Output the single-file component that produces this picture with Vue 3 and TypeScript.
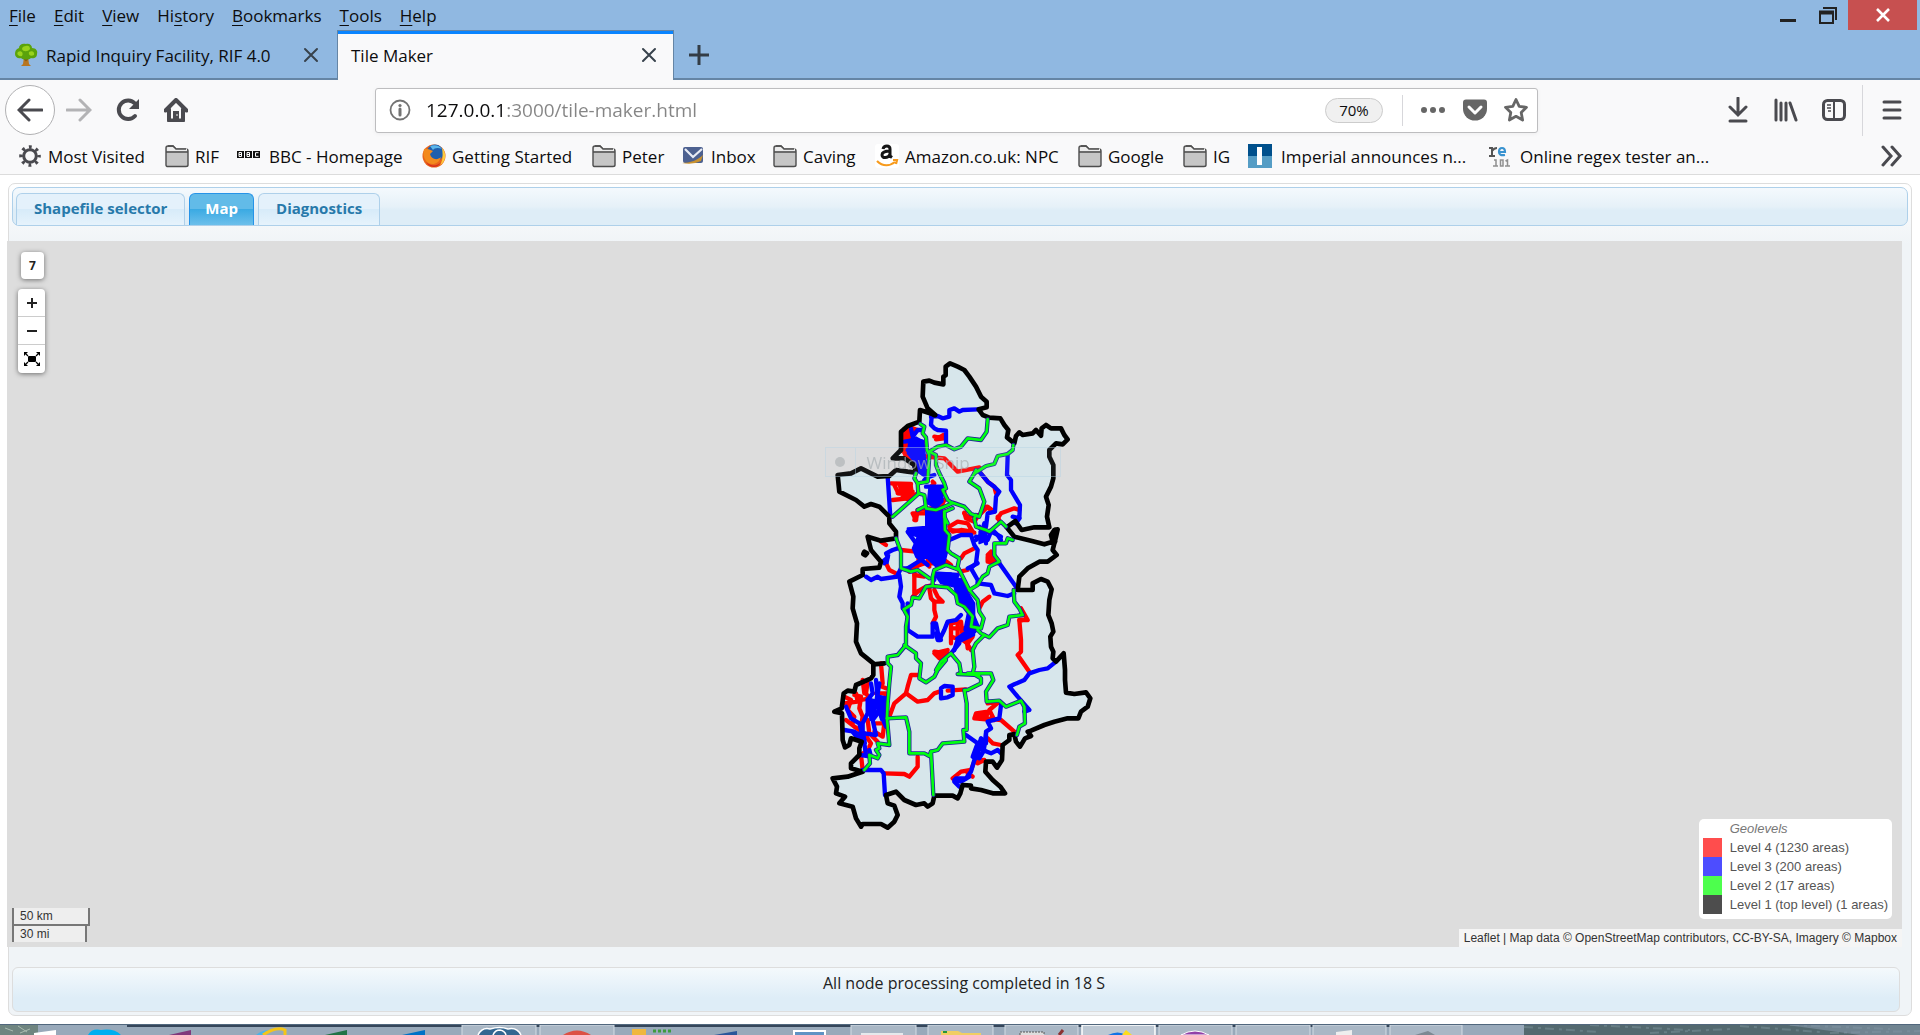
<script setup lang="ts">
import { ref } from 'vue'

interface MenuEntry { before: string; key: string; after: string }
interface Bookmark { icon: string; label: string }
interface Level { name: string; tone: string }

const menus: MenuEntry[] = [
  { before: '', key: 'F', after: 'ile' },
  { before: '', key: 'E', after: 'dit' },
  { before: '', key: 'V', after: 'iew' },
  { before: 'Hi', key: 's', after: 'tory' },
  { before: '', key: 'B', after: 'ookmarks' },
  { before: '', key: 'T', after: 'ools' },
  { before: '', key: 'H', after: 'elp' },
]

const bookmarks: Bookmark[] = [
  { icon: 'gear', label: 'Most Visited' },
  { icon: 'folder', label: 'RIF' },
  { icon: 'bbc', label: 'BBC - Homepage' },
  { icon: 'firefox', label: 'Getting Started' },
  { icon: 'folder', label: 'Peter' },
  { icon: 'mail', label: 'Inbox' },
  { icon: 'folder', label: 'Caving' },
  { icon: 'amazon', label: 'Amazon.co.uk: NPC' },
  { icon: 'folder', label: 'Google' },
  { icon: 'folder', label: 'IG' },
  { icon: 'imperial', label: 'Imperial announces n...' },
  { icon: 'regex', label: 'Online regex tester an...' },
]

const tabs: string[] = ['Shapefile selector', 'Map', 'Diagnostics']
const activeTab = ref('Map')
const address = ref('127.0.0.1:3000/tile-maker.html')

const levels: Level[] = [
  { name: 'Level 4 (1230 areas)', tone: 'red' },
  { name: 'Level 3 (200 areas)', tone: 'blue' },
  { name: 'Level 2 (17 areas)', tone: 'green' },
  { name: 'Level 1 (top level) (1 areas)', tone: 'black' },
]

// Boundary of the whole study region, clockwise from the northern lobe.
const outline =
  '403,195 380,175 365,140 367,95 385,92 400,98 427,103 427,80 434,76 434,50 447,40 470,50 490,60 505,80 525,110 540,140 557,155 557,172 533,178 545,195 565,203 598,205 610,225 622,240 618,262 640,280 645,258 655,247 665,255 695,250 705,240 720,257 722,235 735,225 750,235 780,235 790,255 800,268 785,283 765,280 745,300 745,320 757,345 757,385 750,410 735,440 743,465 738,500 745,532 700,532 662,540 643,513 617,532 640,560 690,572 730,583 755,575 750,555 760,540 770,538 765,560 755,600 767,615 740,635 715,635 680,655 655,680 650,720 695,720 695,700 720,687 740,695 752,718 745,750 742,795 752,820 757,845 748,860 750,890 757,905 755,925 765,935 788,910 792,960 792,990 795,1028 820,1032 855,1027 868,1045 860,1070 840,1085 832,1105 800,1105 760,1115 730,1125 690,1142 680,1145 690,1158 672,1165 657,1190 645,1175 640,1152 625,1155 625,1170 605,1185 603,1230 588,1253 575,1235 555,1235 553,1265 575,1290 598,1310 612,1330 575,1330 540,1320 510,1315 510,1307 485,1305 478,1330 470,1345 455,1337 400,1337 395,1360 380,1370 370,1360 345,1365 310,1350 285,1325 255,1335 260,1360 280,1367 290,1395 280,1415 260,1433 240,1422 185,1422 180,1430 165,1405 155,1370 115,1360 132,1340 105,1330 108,1310 95,1285 140,1280 185,1265 150,1255 150,1240 175,1215 175,1195 182,1175 150,1165 145,1185 132,1192 125,1170 123,1090 100,1085 122,1075 128,1030 140,1022 160,1025 165,1005 210,985 217,975 217,940 180,910 165,875 168,820 155,775 157,740 145,695 185,675 185,657 235,653 240,635 210,600 200,560 240,572 285,565 285,545 265,520 265,500 235,470 210,462 190,470 165,450 115,425 110,375 150,370 180,355 210,370 230,380 265,378 285,360 320,365 345,368 340,345 310,325 275,325 300,300 300,245 320,228 355,215 357,180'

const redLines: string[] = [
  '320,230 350,240 330,260 310,270 330,280', '300,300 318,310 325,320', '400,260 428,265 405,268 428,255',
  '375,320 430,325 470,365 520,355 535,352', '362,320 372,318', '395,395 400,400 390,410',
  '270,400 330,402 310,410 330,415 300,420 335,425 290,430 340,435 305,440 325,450', '280,405 290,425', '320,405 315,440', '275,450 320,445 350,430',
  '345,510 335,490 375,490 375,480', '340,510 345,495', '425,420 430,425', '425,460 430,450',
  '350,480 345,510 350,480 390,475 430,470',
  '490,488 495,505 520,515 530,500', '555,470 570,480', '590,505 600,490 640,475 655,480', '590,500 595,512', '535,365 560,395 580,410 585,430',
  '445,530 470,515 500,520 515,545 480,540 455,545', '445,540 520,548', '490,490 500,500 535,495 560,470 580,485', '240,575 255,585', '300,600 345,605', '480,625 490,610 520,595',
  '255,640 265,660 285,670', '325,665 340,650 370,640 395,640 430,630 450,645', '340,660 340,730 375,710 395,705', '340,675 370,680', '385,650 380,625', '475,665 500,660', '335,740 350,725',
  '560,615 570,605 575,630 590,640 560,635 560,620 580,615', '565,740 545,755 535,775', '385,715 390,745 400,755 400,780 405,800 395,820', '400,720 410,740 425,755 400,755',
  '450,880 450,820 480,815 485,860 510,900', '450,835 500,835 480,870 450,860', '470,820 470,860 500,880 515,860', '495,845 500,895', '400,905 440,910 430,920 415,925 400,910 440,900',
  '660,775 680,810 655,810 660,870 660,905 650,915 685,965', '655,810 665,810',
  '240,940 245,1000 230,1005 255,1015', '350,975 330,975 320,1010 315,1030 280,1060 265,1100', '315,1030 350,1055 380,1050 400,1030 415,1025', '440,1022 495,1018',
  '250,1270 310,1272 325,1280 350,1250 350,1220', '185,1260 180,1215 200,1200',
  '130,1040 150,1050 140,1080 160,1100 155,1120', '160,1035 180,1040 175,1075 185,1100 180,1130', '200,995 195,1030 205,1045 180,1050', '135,1110 160,1130 190,1150 210,1180 205,1190', '225,1120 250,1120 245,1160 220,1145', '200,1110 205,1150 230,1175', '130,1060 170,1055 165,1030', '225,1030 255,1030 245,1090', '185,990 190,1030',
  '560,1060 595,1055 565,1080 580,1110 520,1105 525,1090 560,1085 555,1105 600,1110 640,1145', '560,1165 575,1180 600,1185', '455,1285 480,1265 510,1260 520,1235 550,1230 530,1240', '500,1270 515,1280',
  '590,1055 600,1060',
]

const blueLines: string[] = [
  '390,200 410,198 425,205 445,200 445,180 460,175 475,185 485,180 530,178', '392,200 390,225 400,235 410,240 435,242 435,280', '330,235 335,260 350,240 365,240', '310,275 345,270 365,275',
  '260,380 268,500', '535,365 560,395 580,410 595,425 585,440 582,485 560,490 555,530', '620,318 618,375 630,390 630,420 645,445 657,465 655,505 635,500', '655,505 645,520',
  '375,410 430,410', '370,390 385,380 400,375', '320,300 350,320 340,350 370,370',
  '320,545 345,580 350,620 380,645', '445,570 480,555 510,555 520,585 530,600 525,640 510,655 530,690 530,700', '525,560 560,570 570,545 600,560', '525,570 540,555 550,520 555,580', '535,530 545,550 575,540 590,555 600,570',
  '530,700 570,705 580,730 620,738 640,730', '595,640 645,710', '195,680 210,690 230,680 240,687 290,680', '320,655 360,630 370,620', '250,640 260,620 255,610 275,600 290,595', '290,675 300,655 325,655',
  '295,675 300,710 295,740 305,760 305,775', '320,840 350,860 395,860 395,820 405,820 415,870 430,840 440,815 465,810 480,795', '320,760 320,840', '460,900 470,870 520,845 530,830', '480,690 500,760 530,830', '400,690 400,670 470,675', '405,850 410,870 420,870',
  '450,910 475,880', '500,655 530,640',
  '765,935 740,955 715,960 685,970 670,990 640,1003 625,1010 650,1040 685,1080 670,1085', '420,1040 420,1015 430,1008 455,1010 455,1035 440,1042 420,1045 420,1020', '135,1070 150,1105 175,1120 190,1180 195,1215', '210,1000 215,1030 200,1050 200,1090 185,1120 185,1170', '225,990 230,1040 255,1045', '200,1050 215,1080 230,1090 215,1110 225,1155 190,1150', '130,1140 160,1145 190,1170', '235,1000 225,1060 255,1130', '180,1215 210,1220 205,1200', '185,1260 240,1260 248,1270 252,1335',
  '600,1065 595,1105 560,1115 570,1135 555,1145 555,1180 540,1165 520,1230 510,1265 495,1285 465,1285 460,1295 475,1310', '495,1155 530,1180 515,1220', '525,1225 545,1170 550,1200 535,1225', '545,1200 570,1210 590,1200 600,1210', '555,1150 550,1190',
  '460,1290 480,1295 505,1280',
]

// Dense urban clusters where the level 3 lines run together.
const blueAreas: string[] = [
  '325,270 345,262 368,275 372,320 378,350 365,360 340,335 320,310', '385,410 425,412 425,455 405,475 380,460', '345,335 380,345 378,385 350,365',
  '375,480 425,480 435,520 440,600 430,640 405,650 380,625 345,620 335,595 350,560 320,550 320,535 375,530',
  '400,670 450,670 480,690 505,735 520,760 520,820 530,825 510,850 490,840 500,790 470,750 460,710 420,700',
  '235,1045 255,1045 255,1110 240,1110 228,1070', '200,1045 220,1050 225,1090 208,1110', '150,1145 190,1150 195,1180 170,1170',
  '535,545 550,530 560,570 535,580', '465,865 515,830 520,855 480,875', '245,630 265,615 260,640',
]

const redAreas: string[] = [
  '400,908 440,902 440,915 420,923 405,920', '290,405 335,402 340,440 310,445 295,430', '520,1092 565,1090 555,1110 520,1105', '305,232 340,235 330,300 345,340 310,325 300,300', '345,620 375,640 350,655', '560,615 580,610 590,638 560,635',
]

const greenLines: string[] = [
  '358,222 370,230 365,250 375,262 378,300 385,315 380,395 350,400', '345,370 340,385 350,400 352,432 275,500', '560,208 557,245 540,270 500,265 480,290 460,298 435,285 410,290 385,305 405,315 405,345 415,370 430,400 435,415 425,420 440,450 455,460 430,470 405,480 375,475 370,435 352,430', '637,285 635,300 620,312 590,318 580,342 555,348 520,370 505,395 535,415 550,455 535,500 510,492 490,470 455,458',
  '455,475 430,485 432,540 445,555 440,600 450,610 475,625 470,650 485,680 505,720 530,750 535,785 548,805 540,835 510,830 515,800 490,770 470,760 465,735 440,712 395,708 395,680 400,660 435,645 475,660', '430,485 430,500 440,520', '525,495 520,505 525,530 555,540 565,545 600,515 615,530', '520,370 525,360',
  '285,565 300,605 300,655 330,665 350,660 385,685', '395,708 375,710 355,745 335,742 330,765 308,778 320,800 315,830 315,885 290,915 260,920 260,940 270,950 265,1000 260,1060 258,1105', '310,885 345,910 345,925 360,940 355,985 375,997 400,980 410,960 435,930', '405,960 420,935 450,910 475,940 480,970 470,972 535,975', '505,720 530,705 545,680 560,670 565,650 595,635 580,615 580,580 615,580 620,565 635,570', '638,720 640,755 655,775 665,795 625,800 620,825 590,835 565,862 540,850 530,840', '550,855 525,880 515,900 520,950 515,970 540,985 540,1000 500,1020 490,1020 497,1060 497,1140 487,1140 490,1175 425,1180 410,1200 390,1205 397,1335', '500,970 570,970 577,990 555,1025 557,1055 595,1052 615,1070 660,1052 670,1070 672,1120 655,1130 648,1155', '258,1105 265,1185 230,1180 235,1195 225,1200 235,1215 230,1225 205,1215 207,1240 190,1260', '258,1105 315,1102 325,1145 325,1210 370,1210 385,1218 390,1205', '350,480 370,470',
]
</script>

<template>
  <div class="window">
    <header class="titlebar">
      <nav class="menubar" aria-label="Application menu">
        <button v-for="m in menus" :key="m.key + m.after" type="button" class="menu">{{ m.before }}<u>{{ m.key }}</u>{{ m.after }}</button>
      </nav>
      <div class="window-controls">
        <button type="button" class="wc" aria-label="Minimise">
          <svg width="20" height="20" viewBox="0 0 20 20"><path d="M2 15.500H18" stroke="#222" stroke-width="3" /></svg>
        </button>
        <button type="button" class="wc" aria-label="Restore">
          <svg width="20" height="20" viewBox="0 0 20 20" fill="none" stroke="#222"><path d="M5 3H18V15" stroke-width="2" /><path d="M2 7V18H15V7" stroke-width="2" /><path d="M1 7.500H16" stroke-width="4" /></svg>
        </button>
        <button type="button" class="wc close" aria-label="Close window">
          <svg width="16" height="14" viewBox="0 0 16 14"><path d="M2 1L14 13M14 1L2 13" stroke="#fff" stroke-width="2.600" /></svg>
        </button>
      </div>
    </header>

    <div class="tabstrip">
      <div class="browser-tab">
        <svg width="24" height="24" viewBox="0 0 24 24">
          <path d="M10 14h4l1 7 2 2H7l2-2z" fill="#b87520" /><path d="M9 14l3 3 3-3" stroke="#8d5a13" fill="none" stroke-width="2" />
          <path d="M12 1c3-1 6 1 6 4 4 0 6 3 5 6 0 4-4 5-6 4-2 2-8 2-10 0-3 1-6-1-6-4 0-3 1-5 4-6 0-3 3-5 7-4z" fill="#5ba30b" />
          <path d="M12 3c2-1 4 0 4 3-2 3-7 3-8 0 0-2 2-3 4-3zM4 9c3-2 6 1 4 4-3 1-6-2-4-4zM15 9c3-2 6 0 5 3-3 2-6 0-5-3z" fill="#99d31d" />
        </svg>
        <span class="tab-title">Rapid Inquiry Facility, RIF 4.0</span>
        <button type="button" class="bare" aria-label="Close tab"><svg width="16" height="16" viewBox="0 0 16 16"><path d="M2 2L14 14M14 2L2 14" class="dark" /></svg></button>
      </div>
      <div class="browser-tab current">
        <span class="tab-title">Tile Maker</span>
        <button type="button" class="bare" aria-label="Close tab"><svg width="16" height="16" viewBox="0 0 16 16"><path d="M2 2L14 14M14 2L2 14" class="dark" /></svg></button>
      </div>
      <button type="button" class="bare new-tab" aria-label="New tab"><svg width="22" height="22" viewBox="0 0 22 22"><path d="M11 1V21M1 11H21" stroke="#333c46" stroke-width="3" /></svg></button>
    </div>

    <div class="toolbar">
      <div class="nav-buttons">
        <button type="button" class="bare back" aria-label="Back"><svg width="26" height="24" viewBox="0 0 26 24"><path d="M25 12H3M12 2L2 12L12 22" class="ico" /></svg></button>
        <button type="button" class="bare" aria-label="Forward"><svg width="26" height="24" viewBox="0 0 26 24"><path d="M1 12H23M14 2L24 12L14 22" class="ico pale" /></svg></button>
        <button type="button" class="bare" aria-label="Reload"><svg width="24" height="24" viewBox="0 0 24 24"><path d="M19 5.500A9.300 9.300 0 1 0 19 18" class="ico thick" /><path d="M23 1V11H13z" fill="#4a4a4f" /></svg></button>
        <button type="button" class="bare" aria-label="Home"><svg width="24" height="24" viewBox="0 0 24 24"><path d="M1.500 12.500L12 2L22.500 12.500M5 11V22.500H19V11" class="ico thick" stroke-linejoin="round" /><path d="M9 21V13h6v8z" fill="#4a4a4f" /><circle cx="13" cy="17" r="1" fill="#bbb" /></svg></button>
      </div>
      <div class="urlbar">
        <svg width="22" height="22" viewBox="0 0 22 22"><circle cx="11" cy="11" r="9.500" fill="none" stroke="#737373" stroke-width="1.800" /><circle cx="11" cy="6.500" r="1.600" fill="#737373" /><path d="M11 10V16" stroke="#737373" stroke-width="3" stroke-linecap="round" /></svg>
        <input v-model="address" class="address" type="text" aria-label="Address" spellcheck="false" />
        <button type="button" class="zoom">70%</button>
        <span class="url-rule"></span>
        <button type="button" class="bare" aria-label="Page actions"><svg width="26" height="24" viewBox="0 0 26 24" fill="#666"><circle cx="4" cy="12" r="3" /><circle cx="13" cy="12" r="3" /><circle cx="22" cy="12" r="3" /></svg></button>
        <button type="button" class="bare" aria-label="Save to Pocket"><svg width="24" height="24" viewBox="0 0 24 24"><path d="M3 1.500H21Q24 1.500 24 4.500V11A12 11.500 0 0 1 0 11V4.500Q0 1.500 3 1.500z" fill="#666" /><path d="M6 9L12 15L18 9" fill="none" stroke="#fff" stroke-width="3" stroke-linecap="round" stroke-linejoin="round" /></svg></button>
        <button type="button" class="bare" aria-label="Bookmark this page"><svg width="24" height="24" viewBox="0 0 24 24"><path d="M12 1.500L15.200 8.400L22.500 9.300L17.200 14.400L18.600 22L12 18.300L5.400 22L6.800 14.400L1.500 9.300L8.800 8.400z" fill="none" stroke="#666" stroke-width="2.800" stroke-linejoin="round" /></svg></button>
      </div>
      <div class="tool-buttons">
        <button type="button" class="bare" aria-label="Downloads"><svg width="24" height="26" viewBox="0 0 24 26"><path d="M12 1V17M4 10L12 18L20 10M4 24H20" class="ico" /></svg></button>
        <button type="button" class="bare" aria-label="Library"><svg width="24" height="24" viewBox="0 0 24 24"><path d="M2 2V22M7 5V22M12 5V22M16 5L22 22" class="ico" /></svg></button>
        <button type="button" class="bare" aria-label="Sidebars"><svg width="24" height="24" viewBox="0 0 24 24"><rect x="1.500" y="2.500" width="21" height="19" rx="4" class="ico" /><path d="M12 3V21" stroke="#4a4a4f" stroke-width="2" /><path d="M5 7H9M5 10H9M6 13H9" stroke="#4a4a4f" stroke-width="1.500" /></svg></button>
      </div>
      <div class="app-menu">
        <button type="button" class="bare" aria-label="Open menu"><svg width="20" height="22" viewBox="0 0 20 22"><path d="M2 3H18M2 11H18M2 19H18" class="ico" /></svg></button>
      </div>
    </div>

    <nav class="bookmarks" aria-label="Bookmarks">
      <a v-for="(b, i) in bookmarks" :key="i" href="#" :class="['bookmark', b.icon]">
        <svg v-if="b.icon === 'gear'" width="24" height="24" viewBox="0 0 24 24" fill="none" stroke="#4a4a4f"><circle cx="12" cy="12" r="6.300" stroke-width="3" /><circle cx="12" cy="12" r="9" stroke-width="3.600" stroke-dasharray="2.800 4.270" stroke-dashoffset="1.400" /></svg>
        <svg v-else-if="b.icon === 'folder'" width="24" height="24" viewBox="0 0 24 24"><path d="M1 21V4Q1 2 3 2H8L11 5H21Q23 5 23 7V21Q23 22.500 21 22.500H3Q1 22.500 1 21z" fill="#c6c6c6" stroke="#4d4d4d" stroke-width="1.400" /><path d="M2 7H22V4.500H11L8 3H3L2 4z" fill="#ececec" /><path d="M1 8H23M3 2H8L11 5H21" fill="none" stroke="#4d4d4d" stroke-width="1.400" /></svg>
        <svg v-else-if="b.icon === 'bbc'" width="24" height="24" viewBox="0 0 24 24"><path d="M1 7H8V14H1zM9 7H16V14H9zM17 7H24V14H17z" fill="#111" /><path d="M3 8.500V12.500H5.500V8.500H3M3 10.500H6M11 8.500V12.500H13.500V8.500H11M11 10.500H14M22.500 8.700H19.500V12.300H22.500" fill="none" stroke="#fff" stroke-width="1" /></svg>
        <svg v-else-if="b.icon === 'firefox'" width="24" height="24" viewBox="0 0 24 24"><circle cx="12" cy="12" r="11.500" fill="#e8641b" /><circle cx="13" cy="9" r="8.500" fill="#1f5fae" /><path d="M8 2C13 0 18 2 20 5C16 3 12 4 11 6z" fill="#5bb6ea" /><path d="M2 5C5 4 8 6 11 7L8 10C9 15 15 17 19 13C17 21 8 22 4 17C1 13 1 9 2 5z" fill="#f38a1d" /><path d="M20 4C25 9 24 18 18 21C21 17 21 10 20 4z" fill="#ffcb3d" /><path d="M4 18C9 23 16 22 19 18C17 24 8 25 4 18z" fill="#d7291e" /></svg>
        <svg v-else-if="b.icon === 'mail'" width="24" height="24" viewBox="0 0 24 24"><rect x="2" y="3" width="20" height="16" rx="2" fill="#4d6190" /><path d="M4 5L12 13L21 5" fill="none" stroke="#e8ecf5" stroke-width="2.200" /><path d="M1 19C9 19 17 16 22 11L20 17Q12 21 1 19z" fill="#c8912f" /></svg>
        <svg v-else-if="b.icon === 'amazon'" width="24" height="24" viewBox="0 0 24 24"><rect width="24" height="24" rx="3" fill="#fff" /><path d="M8 5C9 1 15 1 15 5V12L17 13.500M15 7C10 7 7 8 7 11C7 14.500 13 14.500 15 10.500" fill="none" stroke="#151515" stroke-width="3" /><path d="M2 17C8 23 15 22 20 18M18 16H22L21 20" fill="none" stroke="#f79a1c" stroke-width="2.200" /></svg>
        <svg v-else-if="b.icon === 'imperial'" width="24" height="24" viewBox="0 0 24 24"><path d="M0 0H24V12H0z" fill="#00508c" /><path d="M0 12H24V24H0z" fill="#559dc5" /><path d="M9 3H14V21H9z" fill="#fff" /></svg>
        <svg v-else width="24" height="24" viewBox="0 0 24 24" fill="none"><path d="M2 4H5V12M2 12H8M5 7Q7 4 10 4" stroke="#555" stroke-width="2" /><path d="M12 8H18Q18 4 15 4Q12 4 12 8Q12 12 18 11" stroke="#3a93d0" stroke-width="2.200" /><path d="M7 16H9V22M6 22H11M13.500 16H16V22H13.500zM18.500 17L20.500 16V22M18 22H23" stroke="#909090" stroke-width="1.500" /></svg>
        <span>{{ b.label }}</span>
      </a>
      <button type="button" class="bare overflow" aria-label="More bookmarks"><svg width="24" height="22" viewBox="0 0 24 22"><path d="M3 2L11 11L3 20M12 2L20 11L12 20" class="ico" /></svg></button>
    </nav>

    <main class="page">
      <section class="panel">
        <div class="panel-tabs" role="tablist">
          <button v-for="t in tabs" :key="t" type="button" role="tab" :aria-selected="t === activeTab" :class="['panel-tab', { active: t === activeTab }]" @click="activeTab = t">{{ t }}</button>
        </div>

        <div class="map">
          <div class="map-left">
            <div class="zoom-level">7</div>
            <div class="zoom-bar">
              <button type="button" aria-label="Zoom in"><svg width="12" height="12" viewBox="0 0 12 12"><path d="M6 1V11M1 6H11" stroke="#222" stroke-width="2" /></svg></button>
              <button type="button" aria-label="Zoom out"><svg width="12" height="12" viewBox="0 0 12 12"><path d="M1 6H11" stroke="#222" stroke-width="2" /></svg></button>
              <button type="button" aria-label="Full screen"><svg width="16" height="16" viewBox="0 0 16 16"><rect x="4" y="5" width="8" height="6" rx="1" /><path d="M0 1H4L0 5zM16 1V5L12 1zM0 15V11L4 15zM16 15H12L16 11z" /><path d="M2 3L4 5M14 3L12 5M2 13L4 11M14 13L12 11" stroke="#000" stroke-width="1.200" /></svg></button>
            </div>
          </div>

          <svg class="regions" viewBox="0 0 900 1470" role="img" aria-label="Administrative boundaries by geolevel">
            <polygon :points="outline" class="land" />
            <polygon v-for="(p, i) in redAreas" :key="'ra' + i" :points="p" class="red-area" />
            <polyline v-for="(p, i) in redLines" :key="'r' + i" :points="p" class="line red-line" />
            <polygon v-for="(p, i) in blueAreas" :key="'ba' + i" :points="p" class="blue-area" />
            <polyline v-for="(p, i) in blueLines" :key="'b' + i" :points="p" class="line blue-line" />
            <polygon :points="outline" class="line black-line" />
            <path d="M190 605l8 5-5 6-6-4zM762 540l5 5-10 25 5 5M385 185l15 10M217 943L250 940" class="line black-line" />
            <polyline v-for="(p, i) in greenLines" :key="'gu' + i" :points="p" class="line green-edge" />
            <polyline v-for="(p, i) in greenLines" :key="'g' + i" :points="p" class="line green-line" />
          </svg>

          <div class="snip"><span class="snip-mark"><i></i></span><span class="snip-text">Window Snip</span></div>

          <div class="scale"><div class="km">50 km</div><div class="mi">30 mi</div></div>

          <div class="map-right">
            <div class="legend">
              <em>Geolevels</em>
              <div v-for="l in levels" :key="l.name" class="legend-row"><i :class="['swatch', l.tone]"></i><span>{{ l.name }}</span></div>
            </div>
            <div class="attribution"><a href="#">Leaflet</a> | Map data © <a href="#">OpenStreetMap</a> contributors, <a href="#">CC-BY-SA</a>, Imagery © <a href="#">Mapbox</a></div>
          </div>
        </div>

        <div class="status" role="status">All node processing completed in 18 S</div>
      </section>
    </main>

    <footer class="taskbar">
      <svg width="1920" height="11" viewBox="0 0 1920 11">
        <rect width="1920" height="11" fill="#98a9ba" />
        <rect width="38" height="11" fill="#6f8580" /><path d="M5 4l8 3M18 2l9 6M20 9l10-4" stroke="#a9bbb0" />
        <rect x="127" width="1335" height="3" fill="#35465a" />
        <path d="M34 11V9L56 6V11z" fill="#fff" />
        <path d="M88 11Q92 4 101 6Q114 4 121 11z" fill="#00aff0" />
        <path d="M169 11L191 6V11z" fill="#80397b" />
        <path d="M256 11Q262 6 270 6L264 11z" fill="#4ab3e8" /><path d="M263 11Q276 2 285 6V11" fill="none" stroke="#f5c518" stroke-width="3" />
        <path d="M325 11L347 6V11z" fill="#217346" /><path d="M402 11L425 6V11z" fill="#0072c6" />
        <g fill="#a9b7c5" stroke="#d4dce4"><path d="M462 12V1H536V12zM540 12V1H614V12zM851 12V1H916V12zM928 12V1H993V12zM1005 12V1H1078V12zM1159 12V1H1232V12zM1236 12V1H1310V12zM1313 12V1H1386V12zM1390 12V1H1462V12z" /></g>
        <path d="M1082 12V1H1155V12z" fill="#bdc8d3" stroke="#fff" stroke-width="1.500" />
        <path d="M478 11Q482 3 490 5Q500 2 508 5Q517 3 521 11M493 11Q495 6 500 6Q505 7 506 11" fill="#336791" stroke="#fff" stroke-width="1.500" />
        <path d="M563 11Q577 2 591 11z" fill="#dd5144" />
        <path d="M632 5H646V11H632z" fill="#efb73e" /><path d="M653 7H671" stroke="#3d9b3d" stroke-width="3" stroke-dasharray="3 2" />
        <path d="M714 11L737 7V11z" fill="#2b579a" />
        <path d="M794 11V7H825V11" fill="#5f93c4" stroke="#fff" stroke-width="2" />
        <path d="M861 11V9H903V11z" fill="#e6e9ec" /><path d="M941 11V7H958L962 9H981V11z" fill="#f1ce63" /><path d="M943 8H947" stroke="#25953b" stroke-width="2" />
        <path d="M1020 11V8H1044V11" fill="#ddd" stroke="#555" stroke-dasharray="2 1" /><path d="M1059 11L1063 6" stroke="#8b3333" stroke-width="3" />
        <path d="M1108 11Q1118 6 1126 11z" fill="#1173e6" /><path d="M1122 11L1126 6L1132 11z" fill="#ffdc1a" />
        <path d="M1181 11Q1195 3 1209 11z" fill="#9141a8" stroke="#fff" /><path d="M1336 11V8L1352 6V11z" fill="#eee" /><path d="M1415 11L1428 7L1435 11z" fill="#7c8993" />
        <rect x="1524" width="396" height="11" fill="#53696f" /><path d="M1524 3L1600 8M1590 1L1690 6M1650 9L1730 5M1740 2L1820 8M1790 1L1890 5M1830 9L1920 7" stroke="#677e85" stroke-width="2" stroke-dasharray="9 5 3 4" /><path d="M1780 0H1920V11H1860z" fill="#8496a8" opacity=".6" />
        <path d="M0 .500H1920" stroke="#51677d" />
      </svg>
    </footer>
  </div>
</template>

<style>
body { margin: 0; background: #fff; }
</style>

<style scoped>
.window { display: flex; flex-direction: column; min-height: 100vh; font-family: "Open Sans", "Noto Sans", sans-serif; font-size: 17px; color: #0c0c0d; }
button { font: inherit; color: inherit; cursor: pointer; }
svg { display: block; flex: none; }
.bare { border: 0; background: none; padding: 0; display: flex; align-items: center; justify-content: center; }
.ico { fill: none; stroke: #4a4a4f; stroke-width: 3; stroke-linecap: round; }
.ico.thick { stroke-width: 4; }
.ico.pale { stroke: #b3b3b5; }
.dark { stroke: #38424c; stroke-width: 2; stroke-linecap: round; }

.titlebar { display: flex; justify-content: space-between; height: 30px; background: #90b8e1; }
.menubar { display: flex; align-items: center; padding-left: 9px; gap: 18px; }
.menu { border: 0; background: none; padding: 2px 0 0; line-height: 30px; }
.menu u { text-underline-offset: 3px; text-decoration-thickness: 1px; }
.window-controls { display: flex; padding-right: 3px; }
.wc { width: 40px; height: 30px; border: 0; padding: 0; background: none; display: flex; align-items: center; justify-content: center; }
.wc.close { width: 69px; background: #c75050; }

.tabstrip { display: flex; height: 50px; background: #90b8e1; box-shadow: inset 0 -2px #6585a5; }
.browser-tab { display: flex; align-items: center; box-sizing: border-box; width: 337px; padding: 0 18px 0 14px; gap: 8px; }
.browser-tab.current { background: #f9f9fa; border: 1px solid #6585a5; border-width: 0 1px; box-shadow: inset 0 1px #6585a5, inset 0 4px #0a84ff; padding: 0 16px 0 13px; }
.tab-title { flex: 1; white-space: nowrap; }
.new-tab { width: 50px; }

.toolbar { display: flex; align-items: center; height: 60px; background: #f9f9fa; }
.nav-buttons { display: flex; align-items: center; width: 375px; padding-left: 5px; gap: 24px; box-sizing: border-box; }
.back { box-sizing: border-box; width: 50px; height: 50px; border: 1px solid #b1b1b3; border-radius: 50%; background: #fff; margin-right: -13px; }
.urlbar { flex: 1; display: flex; align-items: center; box-sizing: border-box; height: 45px; padding: 0 9px 0 13px; gap: 17px; background: #fff; border: 1px solid #bdbdbf; border-radius: 3px; box-shadow: 0 1px 4px #0000000d; }
.address { flex: 1; min-width: 0; height: 40px; border: 0; padding: 0; margin-left: -2px; outline: 0; font: inherit; font-size: 19px; -webkit-text-fill-color: transparent; background: linear-gradient(90deg, #0c0c0d 81px, #858585 81px) text; -webkit-background-clip: text; }
.zoom { width: 58px; height: 25px; margin-right: 2px; padding: 0; border: 1px solid #ccc; border-radius: 13px; background: #f0f0f0; font-size: 15px; line-height: 22px; }
.url-rule { width: 1px; height: 31px; background: #d7d7db; }
.tool-buttons { display: flex; justify-content: flex-end; width: 324px; gap: 24px; padding-right: 16px; box-sizing: border-box; }
.app-menu { display: flex; align-items: center; justify-content: center; box-sizing: border-box; width: 58px; height: 51px; border-left: 1px solid #d7d7db; }

.bookmarks { display: grid; grid-template-columns: 147px 71px 186px 170px 89px 92px 102px 203px 105px 65px 239px 220px 1fr; align-items: center; height: 32px; padding: 0 16px 2px 18px; background: #f9f9fa; border-bottom: 1px solid #dcdcdc; }
.bookmark { display: flex; align-items: center; gap: 6px; color: inherit; text-decoration: none; white-space: nowrap; }
.bookmark.bbc, .bookmark.imperial, .bookmark.regex { gap: 9px; }
.overflow { justify-self: end; }

.page { flex: 1; display: flex; flex-direction: column; padding: 8px; color: #222; }
.panel { flex: 1; display: flex; flex-direction: column; box-sizing: border-box; padding: 3px; border: 1px solid #ddd; border-radius: 7px; background: linear-gradient(#fff 0, #f0f4f7 60px); }
.panel-tabs { display: flex; align-items: flex-end; gap: 4px; height: 32px; padding: 5px 3px 0; border: 1px solid #aed0ea; border-radius: 7px; background: linear-gradient(#f4f9fd, #e6f1f8 50%, #deedf7 60%); }
.panel-tab { height: 32px; padding: 0 17px 4px; border: 1px solid #aed0ea; border-bottom: 0; border-radius: 6px 6px 0 0; background: linear-gradient(#e4f1fb 50%, #d7ebf9 50%, #e6f3fc); color: #2779aa; font-size: 15px; font-weight: 700; }
.panel-tab.active { padding: 0 15px 4px; border-color: #2694e8; color: #fff; background: linear-gradient(#62bbe8 50%, #3baae3 50%, #6cbfeb); }

.map { position: relative; flex: 1; display: flex; justify-content: space-between; min-height: 640px; margin: 15px 6px 0 -5px; background: #ddd; font-family: "Liberation Sans", Arial, sans-serif; font-size: 12px; }
.map-left { display: flex; flex-direction: column; gap: 10px; padding: 11px; }
.zoom-level { width: 23px; margin-left: 3px; line-height: 27px; border-radius: 4px; background: #fff; text-align: center; font-weight: 700; font-family: "Open Sans", sans-serif; box-shadow: 0 1px 5px #00000080; }
.zoom-bar { width: 27px; border-radius: 4px; background: #fff; box-shadow: 0 1px 5px #00000080; }
.zoom-bar button { display: flex; align-items: center; justify-content: center; width: 27px; height: 28px; padding: 0; border: 0; border-bottom: 1px solid #ccc; background: none; }
.zoom-bar button:last-child { border-bottom: 0; }

.regions { position: absolute; left: calc(50% - 154px); top: 109px; width: 300px; height: 490px; }
.land { fill: #d7e6eb; }
.line { fill: none; stroke-linejoin: round; stroke-linecap: round; }
.red-area { fill: #f00; }
.blue-area { fill: #00f; stroke: #00f; stroke-width: 6; stroke-linejoin: round; }
.red-line { stroke: #f00; stroke-width: 13; }
.blue-line { stroke: #00f; stroke-width: 13; }
.black-line { stroke: #000; stroke-width: 14; }
.green-edge { stroke: #20209c; stroke-width: 13; }
.green-line { stroke: #0f1; stroke-width: 8; }

.snip { position: absolute; left: calc(50% - 130px); top: 206px; display: flex; width: 236px; height: 30px; box-sizing: border-box; border: 1px solid #b6d3e4a0; background: #d0d8dc20; font-family: "Open Sans", sans-serif; font-size: 17px; line-height: 30px; opacity: .7; }
.snip-mark { display: flex; align-items: center; justify-content: center; width: 29px; border-right: 1px solid #b6d3e4a0; }
.snip-mark i { width: 10px; height: 10px; border-radius: 50%; background: #b0b5b8; }
.snip-text { padding-left: 11px; color: #a9b0b4; }

.scale { position: absolute; left: 5px; bottom: 5px; color: #333; }
.scale div { box-sizing: border-box; padding-left: 6px; border: 2px solid #777; border-top: 0; background: #ffffff80; line-height: 16px; }
.scale .km { width: 78px; }
.scale .mi { width: 75px; border-bottom: 0; }

.map-right { display: flex; flex-direction: column; align-items: flex-end; justify-content: flex-end; gap: 10px; }
.legend { margin-right: 10px; padding: 0 4px 5px; border-radius: 5px; background: #fff; color: #555; font-size: 13px; }
.legend em { display: block; padding-left: 27px; line-height: 19px; color: #777; }
.legend-row { display: flex; gap: 8px; line-height: 19px; }
.swatch { width: 19px; height: 19px; }
.red { background: #ff4d4d; }
.blue { background: #4d4dff; }
.green { background: #4dff4d; }
.black { background: #4d4d4d; }
.attribution { padding: 0 5px; line-height: 18px; background: #ffffffb3; color: #333; }
.attribution a { color: inherit; text-decoration: none; }

.status { height: 43px; margin: 20px 8px 0 0; padding-left: 16px; border: 1px solid #ddd; border-radius: 6px; background: linear-gradient(#f4f9fc, #deedf7 70%); text-align: center; font-size: 16px; line-height: 30px; }

.taskbar { height: 11px; overflow: hidden; background: #98a9ba; }
</style>
